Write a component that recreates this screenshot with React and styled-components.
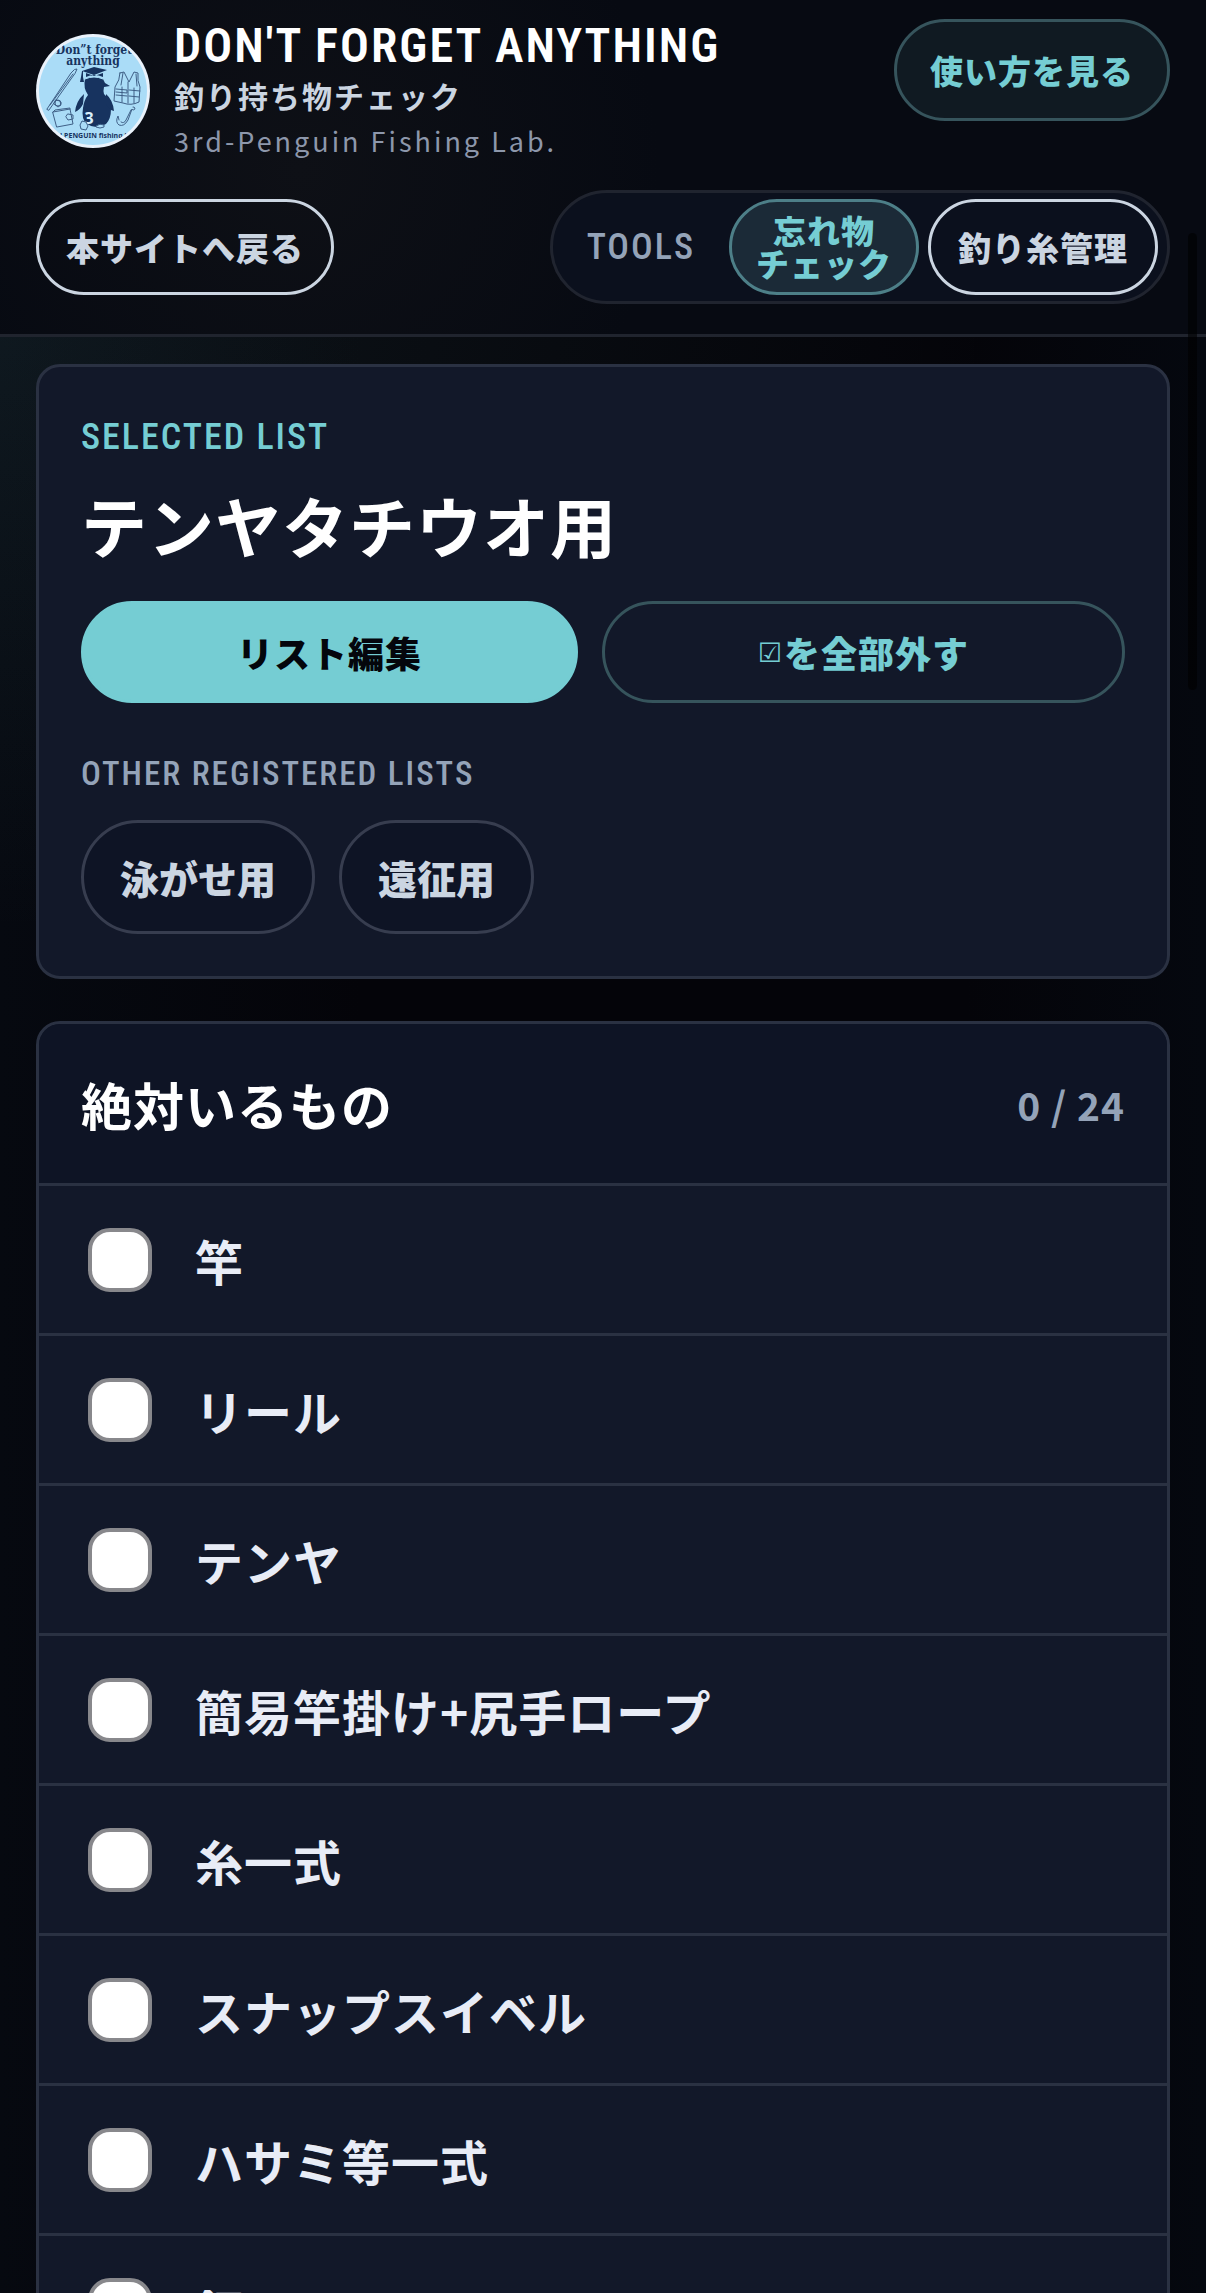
import React, { useState } from "react";
import styled, { createGlobalStyle, css } from "styled-components";

const GlobalStyle = createGlobalStyle`
  *, *::before, *::after { box-sizing: border-box; }
  body {
    margin: 0;
    background: #04060c;
    color: #e8ecf6;
    font-family: "Noto Sans CJK JP", "Noto Sans", sans-serif;
  }
`;

const display = css`
  font-family: "Liberation Sans Narrow", "Roboto Condensed", "Liberation Sans", sans-serif;
  text-transform: uppercase;
`;

const Shell = styled.div`
  height: 100vh;
  display: flex;
  flex-direction: column;
  overflow: hidden;
  background:
    radial-gradient(ellipse 1000px 600px at 0 337px, rgba(117, 205, 211, 0.08), transparent),
    linear-gradient(90deg, #060910, #040409 30%, #040409 80%, #05080f);
`;

const Header = styled.header`
  flex: none;
  display: flex;
  flex-direction: column;
  gap: 27px;
  padding: 19px 36px 30px;
  border-bottom: 3px solid #20242e;
  background: radial-gradient(circle at 300px 170px, #0e1016, #070a12 360px);
`;

const HeaderRow = styled.div`
  display: flex;
  justify-content: space-between;
  align-items: ${(p) => p.$align};
`;

const Brand = styled.a`
  display: flex;
  align-items: center;
  gap: 24px;
  color: inherit;
  text-decoration: none;
`;

const Logo = styled.svg`
  display: block;
  width: 114px;
  height: 114px;
`;

const BrandText = styled.div`
  display: flex;
  flex-direction: column;
`;

const BrandTitle = styled.h1`
  ${display}
  margin: 0;
  font-size: 48px;
  font-weight: 600;
  line-height: 54px;
  letter-spacing: 2px;
  color: #fff;
  white-space: nowrap;
`;

const BrandSub = styled.span`
  font-size: 30px;
  font-weight: 700;
  line-height: 45px;
  letter-spacing: 2px;
  color: #cbd5e1;
`;

const BrandLab = styled.span`
  font-size: 27px;
  line-height: 45px;
  letter-spacing: 3px;
  color: #8d97ab;
`;

const PillButton = styled.button`
  display: flex;
  align-items: center;
  justify-content: center;
  min-height: 102px;
  padding: 0 33px;
  border: 3px solid #36545c;
  border-radius: 57px;
  background: ${(p) => (p.$filled ? "#75cdd3" : p.$tinted ? "#101a22" : "transparent")};
  border-color: ${(p) => (p.$filled ? "#75cdd3" : "#36545c")};
  color: ${(p) => (p.$filled ? "#04060c" : "#75cdd3")};
  font-family: inherit;
  font-size: ${(p) => (p.$large ? "36px" : "33px")};
  font-weight: 800;
  letter-spacing: 1px;
  white-space: nowrap;
  cursor: pointer;
`;

const NavLink = styled.a`
  display: flex;
  align-items: center;
  justify-content: center;
  height: 96px;
  padding: 0 ${(p) => (p.$active ? "24px" : "27px")};
  border: 3px solid ${(p) => (p.$active ? "#4d7f88" : "#cbd5e1")};
  border-radius: 48px;
  background: ${(p) => (p.$active ? "#1b2a37" : "transparent")};
  color: ${(p) => (p.$active ? "#75cdd3" : "#cbd5e1")};
  font-size: 33px;
  font-weight: 800;
  line-height: 33px;
  letter-spacing: 1px;
  text-align: center;
  text-decoration: none;
  white-space: nowrap;
`;

const Tools = styled.nav`
  display: flex;
  align-items: center;
  gap: 9px;
  padding: 6px 9px;
  border: 3px solid #20242f;
  border-radius: 57px;
  background: #0b101d;
`;

const ToolsLabel = styled.span`
  ${display}
  padding: 0 25px;
  font-size: 36px;
  font-weight: 500;
  letter-spacing: 2px;
  color: #94a3b8;
`;

const Main = styled.main`
  flex: 1;
  min-height: 0;
  display: flex;
  flex-direction: column;
  gap: 42px;
  padding: 27px 36px;
  overflow-y: auto;
  scrollbar-width: none;
`;

const Card = styled.section`
  flex: none;
  overflow: hidden;
  border: 3px solid #2a3142;
  border-radius: 24px;
  background: #121829;
`;

const SelectedBody = styled.div`
  display: flex;
  flex-direction: column;
  padding: 42px;
`;

const Eyebrow = styled.p`
  ${display}
  margin: 0;
  font-size: ${(p) => (p.$accent ? "36px" : "33px")};
  font-weight: 500;
  line-height: 57px;
  letter-spacing: 2px;
  color: ${(p) => (p.$accent ? "#75cdd3" : "#94a3b8")};
`;

const ListTitle = styled.h2`
  margin: 18px 0 36px;
  font-size: 66px;
  font-weight: 700;
  line-height: 81px;
  letter-spacing: 1px;
  color: #fff;
`;

const Actions = styled.div`
  display: flex;
  gap: 24px;
  margin-bottom: 42px;

  & > button { flex: 1 1 auto; }
`;

const Tick = styled.span`
  margin-right: 1px;
  font-family: "DejaVu Sans", sans-serif;
  font-size: 27px;
  font-weight: 400;
`;

const Chips = styled.div`
  display: flex;
  flex-wrap: wrap;
  gap: 24px;
  margin-top: 18px;
`;

const Chip = styled.button`
  height: 114px;
  padding: 0 36px;
  border: 3px solid #373d4f;
  border-radius: 57px;
  background: #0e1425;
  color: #cbd5e1;
  font-family: inherit;
  font-size: 39px;
  font-weight: 800;
  cursor: pointer;
`;

const GroupHeader = styled.header`
  display: flex;
  align-items: center;
  justify-content: space-between;
  height: 162px;
  padding: 0 42px;
  border-bottom: 3px solid #2a3142;
  background: #0e1425;
`;

const GroupTitle = styled.h2`
  margin: 0;
  font-size: 51px;
  font-weight: 700;
  letter-spacing: 1px;
  color: #fff;
`;

const GroupCount = styled.span`
  font-size: 39px;
  font-weight: 700;
  letter-spacing: 1px;
  color: #94a3b8;
`;

const Items = styled.ul`
  margin: 0;
  padding: 0;
  list-style: none;
`;

const Item = styled.li`
  border-bottom: 3px solid #2a3142;
`;

const ItemLabel = styled.label`
  display: flex;
  align-items: center;
  gap: 43px;
  height: 147px;
  padding: 0 49px;
  color: #e8ecf6;
  font-size: 48px;
  font-weight: 700;
  letter-spacing: 1px;
  cursor: pointer;
`;

const Check = styled.input`
  appearance: none;
  flex: none;
  width: 64px;
  height: 64px;
  margin: 0;
  border: 4px solid #88888c;
  border-radius: 22px;
  background: #fff;

  &:checked { background: #75cdd3; }
`;

const ScrollThumb = styled.div`
  position: fixed;
  top: 233px;
  right: 9px;
  width: 9px;
  height: 457px;
  border-radius: 5px;
  background: rgba(0, 0, 0, 0.6);
`;

const ITEMS = [
  "竿",
  "リール",
  "テンヤ",
  "簡易竿掛け+尻手ロープ",
  "糸一式",
  "スナップスイベル",
  "ハサミ等一式",
  "餌",
];

const TOTAL = 24;

function PenguinLogo() {
  return (
    <Logo viewBox="0 0 114 114" role="img" aria-label="3rd-Penguin Fishing Lab.">
      <defs>
        <clipPath id="disc"><circle cx="57" cy="57" r="54" /></clipPath>
      </defs>
      <circle cx="57" cy="57" r="57" fill="#eaf2fb" />
      <circle cx="57" cy="57" r="54" fill="#aadcf7" />
      <g clipPath="url(#disc)">
        <g fill="#17335f" fontFamily='"DejaVu Serif Condensed", "DejaVu Serif", serif' fontWeight="700" textAnchor="middle">
          <text x="58" y="20" fontSize="12">Don”t forget</text>
          <text x="57" y="31" fontSize="12">anything</text>
        </g>
        <text x="57" y="104" fill="#17335f" fontFamily='"Noto Sans", sans-serif' fontWeight="700" fontSize="7" textAnchor="middle">
          3rd PENGUIN fishing lab
        </text>
        <g fill="#17335f">
          <path d="M46 37 58 33l13 3-13 5z" />
          <path d="M50 39v4q8-4 17 0v-4l-9 3z" />
          <path d="M46 37h1v6l1 5h-4l1-5z" />
          <path d="M49 45q9-4 18 0l2 4 5 3-6 1q-1 4 0 7 6 5 7 15 0 10-5 15-10 6-19 0-6-5-4-16 1-8 5-13-5-7-3-16z" />
          <path d="M48 60q-8 7-9 18 5-2 8-8zM70 60q7 6 8 17-5-1-8-7z" />
        </g>
        <path d="M49 45q9-4 18 0" fill="none" stroke="#aadcf7" strokeWidth="1" />
        <text x="53" y="90" fill="#d9effb" fontFamily='"Noto Sans", sans-serif' fontWeight="700" fontSize="16" textAnchor="middle">3</text>
        <g fill="#aadcf7" stroke="#3a5d86" strokeWidth="1">
          <path d="M46 87l4 1 2 4-2 4-5-1-1-4z" />
          <path d="M60 92q4-3 8-1v2q-4 2-8 0z" />
        </g>
        <g fill="none" stroke="#3f5f86" strokeWidth="1" strokeLinejoin="round" strokeLinecap="round">
          <path d="M11 75 35 39q4-5 6-4-1 4-6 10L13 76z" />
          <path d="M14 71 37 40M20 66l4 1 1 4-3 2-4-3z" />
          <circle cx="22" cy="69" r="3" />
          <path d="M17 78l17-3 3 15-16 3z M17 78l2-2 15-2v1M32 80l5 1v4l-5 1-2-3z" />
          <path d="M84 39l4-1 5 10 5-10 4 1q-1 8 2 14l-1 15q-8 4-16 1l-9-2 1-14q5-7 5-14z" />
          <path d="M80 55l11 1v3l-11-1M93 56l11 1M80 61l11 1M93 62l10 1M86 53v15M98 54v15M92 48v21M87 39l-2 12M100 40l1 12" />
          <path d="M97 73a1.500 1.500 0 1 1-1 2l-4 11q-4 7-9 5-4-3-1-9l1 4M95 76l-5 10q-2 4-5 2" />
        </g>
      </g>
    </Logo>
  );
}

export default function App() {
  const [checked, setChecked] = useState({});
  const count = Object.values(checked).filter(Boolean).length;
  const toggle = (name) => setChecked((c) => ({ ...c, [name]: !c[name] }));

  return (
    <Shell>
      <GlobalStyle />
      <Header>
        <HeaderRow $align="flex-start">
          <Brand href="#">
            <PenguinLogo />
            <BrandText>
              <BrandTitle>Don't forget anything</BrandTitle>
              <BrandSub>釣り持ち物チェック</BrandSub>
              <BrandLab>3rd-Penguin Fishing Lab.</BrandLab>
            </BrandText>
          </Brand>
          <PillButton type="button" $tinted>使い方を見る</PillButton>
        </HeaderRow>
        <HeaderRow $align="center">
          <NavLink href="#">本サイトへ戻る</NavLink>
          <Tools aria-label="Tools">
            <ToolsLabel>Tools</ToolsLabel>
            <NavLink href="#" $active aria-current="page">忘れ物<br />チェック</NavLink>
            <NavLink href="#">釣り糸管理</NavLink>
          </Tools>
        </HeaderRow>
      </Header>

      <Main>
        <Card>
          <SelectedBody>
            <Eyebrow $accent>Selected list</Eyebrow>
            <ListTitle>テンヤタチウオ用</ListTitle>
            <Actions>
              <PillButton type="button" $filled $large>リスト編集</PillButton>
              <PillButton type="button" $large onClick={() => setChecked({})}>
                <Tick>☑</Tick>を全部外す
              </PillButton>
            </Actions>
            <Eyebrow>Other registered lists</Eyebrow>
            <Chips>
              <Chip type="button">泳がせ用</Chip>
              <Chip type="button">遠征用</Chip>
            </Chips>
          </SelectedBody>
        </Card>

        <Card>
          <GroupHeader>
            <GroupTitle>絶対いるもの</GroupTitle>
            <GroupCount>{count} / {TOTAL}</GroupCount>
          </GroupHeader>
          <Items>
            {ITEMS.map((name) => (
              <Item key={name}>
                <ItemLabel>
                  <Check type="checkbox" checked={!!checked[name]} onChange={() => toggle(name)} />
                  {name}
                </ItemLabel>
              </Item>
            ))}
          </Items>
        </Card>
      </Main>
      <ScrollThumb />
    </Shell>
  );
}
